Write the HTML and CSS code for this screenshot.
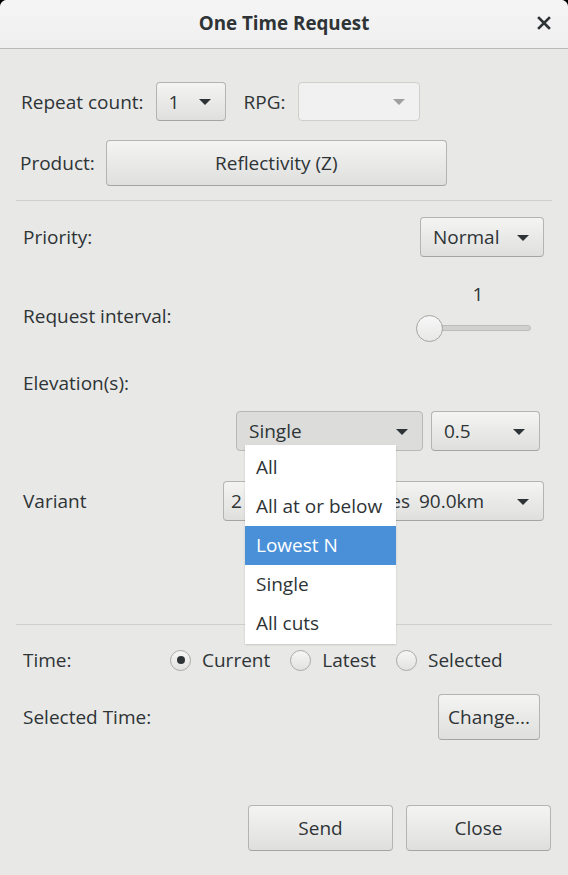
FILE: index.html
```html
<!DOCTYPE html>
<html>
<head>
<meta charset="utf-8">
<link rel="stylesheet" href="styles.css">
</head>
<body>
<div class="window">
  <div class="titlebar">
    <span class="title">One Time Request</span>
    <svg class="close" width="14" height="14" viewBox="0 0 14 14"><path d="M2 2 L12 12 M12 2 L2 12" stroke="#2e3436" stroke-width="2.6" stroke-linecap="square"/></svg>
  </div>
  <div class="content">
    <div class="row row1">
      <span class="label">Repeat count:</span>
      <div class="btn combo c-repeat"><span>1</span><i class="arrow"></i></div>
      <span class="label rpg-label">RPG:</span>
      <div class="btn combo c-rpg disabled"><span></span><i class="arrow"></i></div>
    </div>
    <div class="row row2">
      <span class="label">Product:</span>
      <div class="btn c-product">Reflectivity (Z)</div>
    </div>
    <div class="sep"></div>
    <div class="section">
      <div class="row r-priority">
        <span class="label">Priority:</span>
        <div class="btn combo c-priority"><span>Normal</span><i class="arrow"></i></div>
      </div>
      <div class="row r-interval">
        <span class="label lbl-interval">Request interval:</span>
        <div class="slider">
          <span class="value">1</span>
          <div class="track"><div class="knob"></div></div>
        </div>
      </div>
      <div class="row r-elev">
        <span class="label">Elevation(s):</span>
      </div>
      <div class="row r-elevcombos">
        <div class="btn combo c-single pressed"><span>Single</span><i class="arrow"></i></div>
        <div class="btn combo c-elev"><span>0.5</span><i class="arrow"></i></div>
      </div>
      <div class="row r-variant">
        <span class="label">Variant</span>
        <div class="btn combo c-variant"><span class="vtext">2</span><span class="vtail">es</span><span class="vkm">90.0km</span><i class="arrow"></i></div>
      </div>
    </div>
    <div class="sep sep2"></div>
    <div class="section">
      <div class="row r-time">
        <span class="label lbl-time">Time:</span>
        <div class="radios">
          <span class="radio checked"><i class="dot"></i>Current</span>
          <span class="radio"><i class="dot"></i>Latest</span>
          <span class="radio"><i class="dot"></i>Selected</span>
        </div>
      </div>
      <div class="row r-seltime">
        <span class="label">Selected Time:</span>
        <div class="btn c-change">Change...</div>
      </div>
    </div>
    <div class="row r-actions">
      <div class="btn c-action">Send</div>
      <div class="btn c-action">Close</div>
    </div>
  </div>
  <div class="menu">
    <div class="item">All</div>
    <div class="item">All at or below</div>
    <div class="item active">Lowest N</div>
    <div class="item">Single</div>
    <div class="item">All cuts</div>
  </div>
</div>
</body>
</html>
```
FILE: styles.css
```css
* { box-sizing: border-box; }
html, body { margin: 0; padding: 0; background: #000; }
body {
  font-family: "Open Sans", "Noto Sans", "DejaVu Sans", sans-serif;
  font-size: 19px;
  color: #2e3436;
}
.window {
  position: relative;
  width: 568px;
  height: 875px;
  background: #e8e8e7;
  border-radius: 7px 7px 0 0;
  overflow: hidden;
}
.titlebar {
  height: 49px;
  background: linear-gradient(#f5f5f5, #efefef);
  border-bottom: 1px solid #b9b9b6;
  display: flex;
  align-items: center;
  justify-content: center;
  position: relative;
}
.title { font-weight: 700; font-size: 18.8px; color: #2e3436; margin-top: -2px; }
.close {
  position: absolute;
  right: 17px;
  top: 16px;
}
.content { padding: 0 16px; }
.row { display: flex; align-items: center; }
.row1 { margin-top: 33px; height: 39px; padding-left: 5px; }
.row2 { margin-top: 19px; height: 46px; padding-left: 4px; }
.label { white-space: nowrap; }
.btn {
  background: linear-gradient(#f4f4f3, #dfdfdd);
  border: 1px solid #b4b4b1;
  border-bottom-color: #a5a5a2;
  border-radius: 4px;
  display: flex;
  align-items: center;
  justify-content: center;
  color: #2e3436;
}
.combo { justify-content: space-between; padding: 0 14px 0 12px; }
.arrow {
  width: 0; height: 0;
  border-left: 6px solid transparent;
  border-right: 6px solid transparent;
  border-top: 6px solid #2e3436;
  margin-top: 1px;
}
.c-repeat { margin-left: 12px; width: 70px; height: 39px; }
.rpg-label { margin-left: 18px; }
.c-rpg { margin-left: 12px; width: 122px; height: 39px; }
.disabled { background: #f1f1f1; border-color: #cfcfcd; }
.disabled .arrow { border-top-color: #a0a0a0; }
.c-product { margin-left: 11px; width: 341px; height: 46px; }
.sep { height: 1px; background: #cfcfcd; margin-top: 14px; }
.section { padding: 0 8px 0 7px; }
.r-priority { margin-top: 16px; height: 40px; justify-content: space-between; }
.c-priority { width: 124px; height: 40px; }
.r-interval { margin-top: 26px; height: 60px; justify-content: space-between; }
.lbl-interval { padding-top: 6px; }
.slider { width: 116px; height: 60px; display: flex; flex-direction: column; align-items: center; margin-right: 13px; }
.value { line-height: 22px; margin-left: 10px; }
.track {
  position: relative;
  width: 102px;
  height: 6px;
  margin-top: 20px;
  margin-left: 14px;
  background: #d0d0ce;
  border: 1px solid #bdbdbb;
  border-radius: 3px;
}
.knob {
  position: absolute;
  left: -14px;
  top: -11px;
  width: 27px;
  height: 27px;
  border-radius: 50%;
  border: 1px solid #a4a4a1;
  background: linear-gradient(#f7f7f7, #e8e8e7);
}
.r-elev { margin-top: 25px; height: 30px; }
.r-elevcombos { margin-top: 13px; height: 40px; justify-content: flex-end; gap: 8px; padding-right: 4px; }
.c-single { width: 187px; height: 40px; }
.pressed { background: #dcdcdb; border-color: #b8b8b5; }
.c-elev { width: 109px; height: 40px; }
.r-variant { margin-top: 30px; height: 40px; justify-content: space-between; }
.c-variant { width: 321px; height: 40px; justify-content: flex-start; padding-left: 7px; }
.vtext { width: 143px; }
.vtail { width: 45px; text-align: right; padding-right: 9px; }
.vkm { flex: 1; }
.sep2 { margin-top: 103px; }
.r-time { margin-top: 23px; height: 24px; }
.lbl-time { width: 147px; }
.radios { display: flex; gap: 20px; }
.radio { display: flex; align-items: center; white-space: nowrap; }
.radio .dot {
  width: 21px; height: 21px;
  border-radius: 50%;
  border: 1px solid #a9a9a6;
  background: linear-gradient(#f6f6f6, #e2e2e0);
  margin-right: 11px;
  display: flex; align-items: center; justify-content: center;
}
.radio.checked .dot::after {
  content: "";
  width: 8px; height: 8px; border-radius: 50%; background: #2e3436;
}
.r-seltime { margin-top: 22px; height: 46px; justify-content: space-between; }
.c-change { width: 102px; height: 46px; margin-right: 4px; }
.r-actions { margin-top: 65px; height: 46px; justify-content: flex-end; gap: 13px; padding-right: 1px; }
.c-action { width: 145px; height: 46px; }
.menu {
  position: absolute;
  left: 245px;
  top: 445px;
  width: 151px;
  height: 199px;
  background: #fff;
  padding-top: 3px;
  box-shadow: 0 1px 2px rgba(0,0,0,0.15);
}
.item { height: 39px; line-height: 39px; padding-left: 11px; white-space: nowrap; }
.item.active { background: #4a90d9; color: #fff; }
```
